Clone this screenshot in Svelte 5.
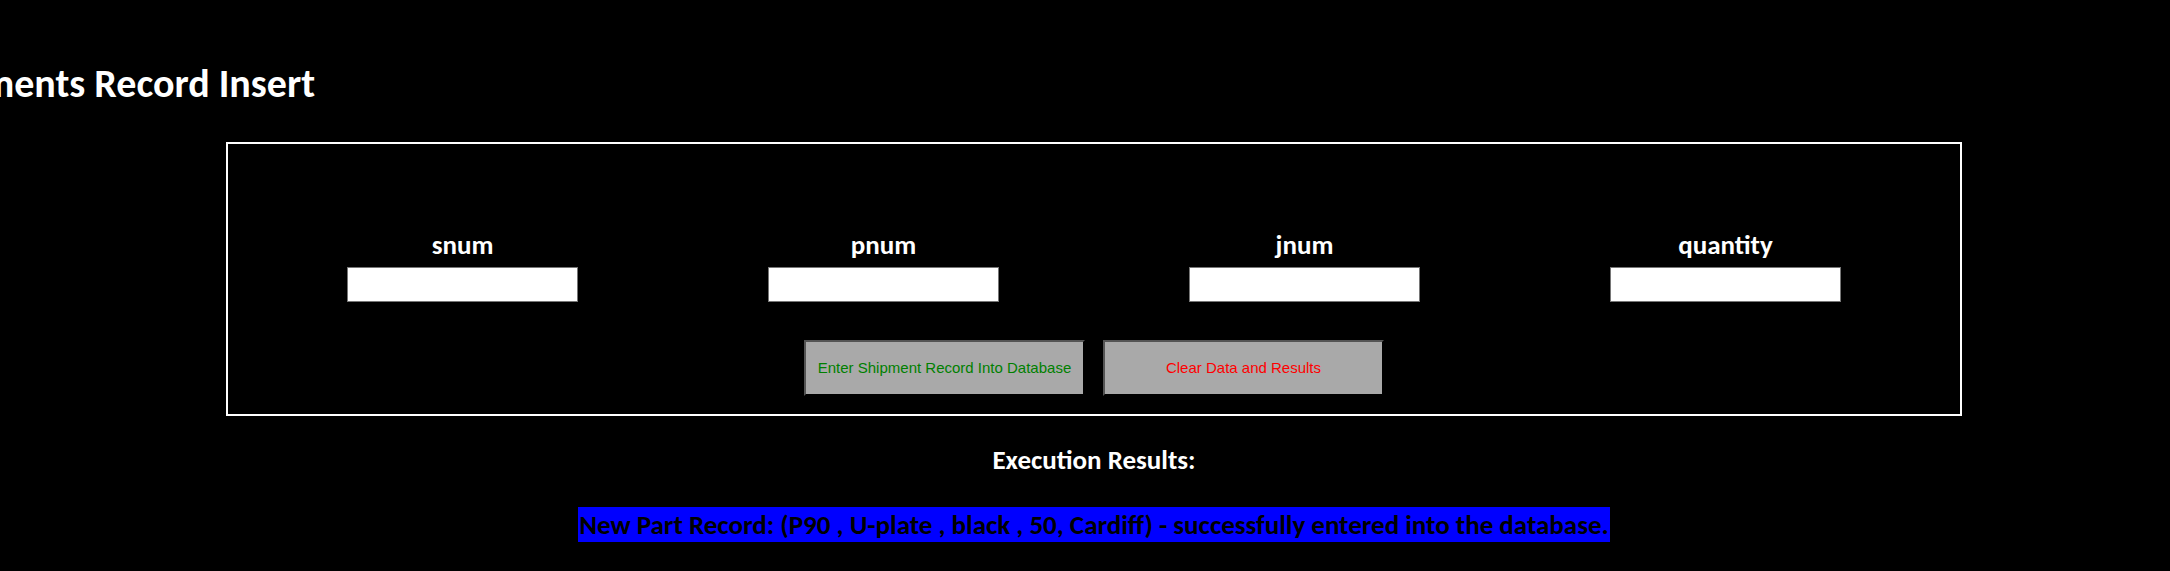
<script>
  const names = ['snum', 'pnum', 'jnum', 'quantity'];
  let values = $state({ snum: '', pnum: '', jnum: '', quantity: '' });
  let message = $state(
    'New Part Record: (P90 , U-plate , black , 50, Cardiff) - successfully entered into the database.'
  );

  function clearAll() {
    for (const name of names) values[name] = '';
    message = '';
  }
</script>

<main>
  <header><h1>Shipments Record Insert</h1></header>
  <form onsubmit={(event) => event.preventDefault()}>
    <div class="fields">
      {#each names as name}
        <div class="field">
          <label for={name}>{name}</label>
          <input id={name} type="text" bind:value={values[name]} />
        </div>
      {/each}
    </div>
    <div class="actions">
      <button class="enter" type="submit">Enter Shipment Record Into Database</button>
      <button class="clear" type="button" onclick={clearAll}>Clear Data and Results</button>
    </div>
  </form>
  <section>
    <h2>Execution Results:</h2>
    <p><output>{message}</output></p>
  </section>
</main>

<style>
  :global(body) {
    background: #000;
  }

  main {
    color: #fff;
    font-family: Carlito, Lato, sans-serif;
    font-size: 27px;
    font-weight: 700;
    line-height: 32px;
    padding: 60px 0 24px 18px;
  }

  header {
    display: flex;
    justify-content: flex-end;
    width: 315px;
    margin-left: -18px;
    overflow: hidden;
  }

  h1 {
    flex: none;
    margin: 0;
    font-size: 40px;
    line-height: 48px;
    white-space: nowrap;
  }

  form {
    box-sizing: border-box;
    width: 80vw;
    margin: 34px auto 0;
    padding: 85px 24px 18px;
    border: 2px solid #fff;
  }

  .fields {
    display: grid;
    grid-template-columns: repeat(4, 1fr);
  }

  .field {
    display: flex;
    flex-direction: column;
    align-items: center;
    gap: 6px;
  }

  input {
    box-sizing: border-box;
    width: 231px;
    max-width: 90%;
    height: 35px;
    padding: 0 4px;
    border: 1px solid #767676;
    background: #fff;
    font: 24px Carlito, Lato, sans-serif;
  }

  .actions {
    display: flex;
    justify-content: center;
    gap: 18px;
    margin-top: 38px;
  }

  button {
    box-sizing: border-box;
    width: 281px;
    height: 56px;
    padding: 0 0 2px;
    border: 2px outset #000;
    background: #a9a9a9;
    font: 15px "Liberation Sans", Arial, sans-serif;
    white-space: nowrap;
  }

  .enter {
    color: green;
  }

  .clear {
    color: red;
  }

  section {
    text-align: center;
  }

  h2 {
    margin: 28px 0 0;
    font-size: 27px;
    line-height: 32px;
  }

  p {
    margin: 31px 0 0;
  }

  output {
    display: inline-block;
    padding: 0 1px;
    background: #00f;
    color: #000;
    line-height: 35px;
  }
</style>
